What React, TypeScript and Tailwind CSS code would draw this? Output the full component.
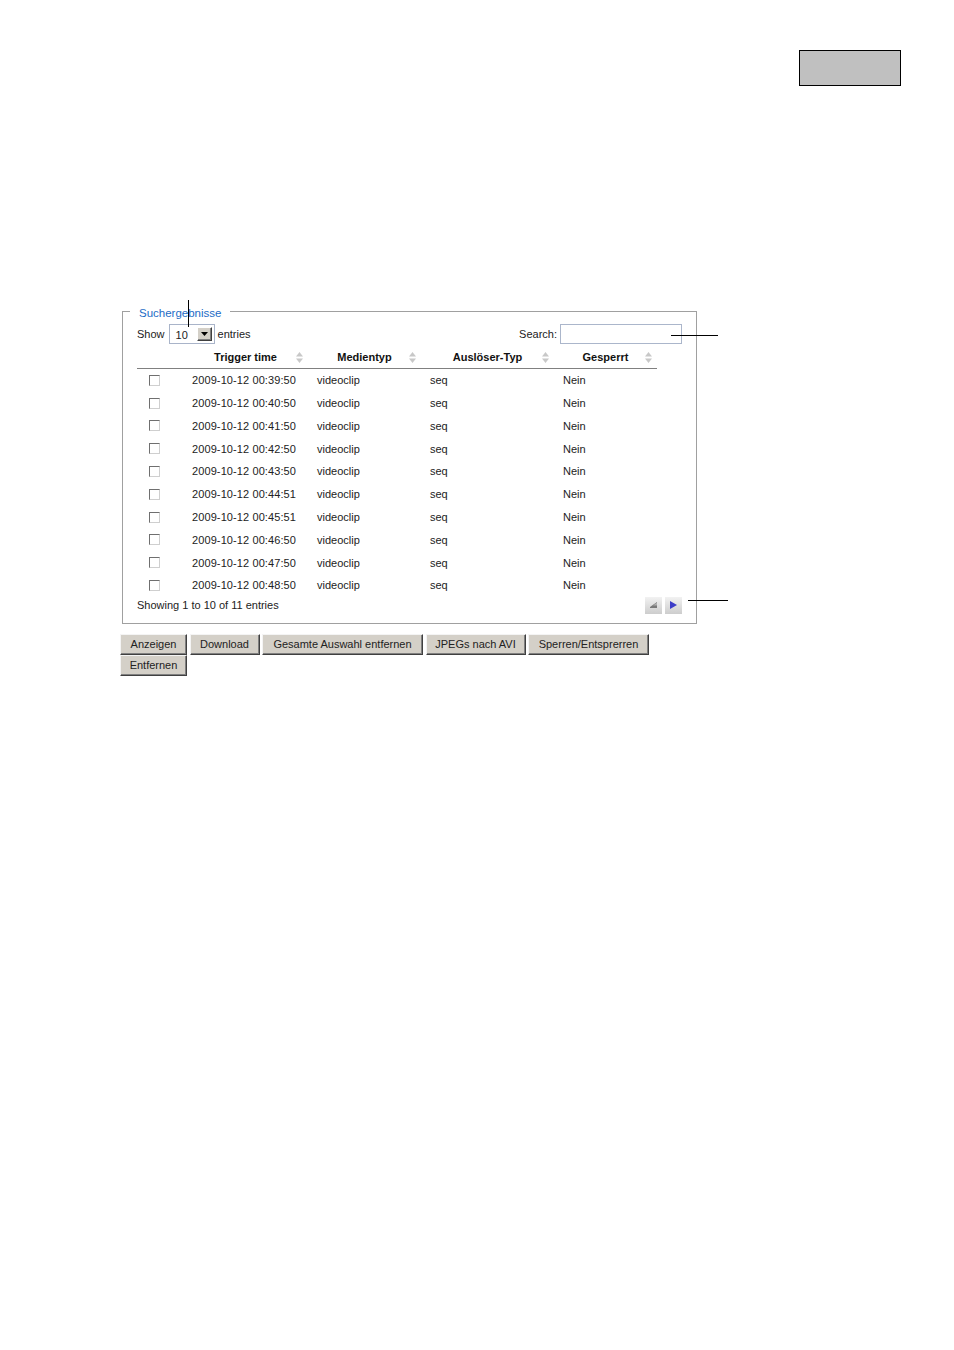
import React from "react";

const rows = [
  "2009-10-12 00:39:50",
  "2009-10-12 00:40:50",
  "2009-10-12 00:41:50",
  "2009-10-12 00:42:50",
  "2009-10-12 00:43:50",
  "2009-10-12 00:44:51",
  "2009-10-12 00:45:51",
  "2009-10-12 00:46:50",
  "2009-10-12 00:47:50",
  "2009-10-12 00:48:50",
];

function SortIcon() {
  return (
    <svg width="7" height="11" viewBox="0 0 7 11" className="shrink-0">
      <polygon points="3.5,0 7,4.5 0,4.5" fill="#c8c8c8" />
      <polygon points="0,6.5 7,6.5 3.5,11" fill="#c8c8c8" />
    </svg>
  );
}

function HeaderCell({ label }: { label: string }) {
  return (
    <div className="flex items-center pl-[12px] pr-[5px]">
      <span className="flex-1 text-center font-bold text-[#111]">{label}</span>
      <SortIcon />
    </div>
  );
}

function Checkbox() {
  return (
    <div className="w-[11px] h-[11px] ml-[12px] bg-white border border-t-[#6f6f6f] border-l-[#6f6f6f] border-r-[#cfcfcf] border-b-[#cfcfcf]" />
  );
}

function WinButton({ label, w }: { label: string; w: string }) {
  return (
    <button
      className={`${w} h-[21px] bg-[#d4d0c8] text-[#222] text-[11px] leading-none border-t border-l border-t-[#f4f4f4] border-l-[#f4f4f4] border-r border-b border-r-[#404040] border-b-[#404040] shadow-[inset_-1px_-1px_#808080] flex items-center justify-center`}
    >
      {label}
    </button>
  );
}

export default function App() {
  return (
    <div className="relative w-[954px] min-h-[1350px] bg-white text-[11px] text-[#222] font-['Liberation_Sans',Arial,sans-serif]">
      <div className="flex justify-end pt-[50px] pr-[53px]">
        <div className="w-[102px] h-[36px] bg-[#c0c0c0] border-[1.5px] border-black" />
      </div>

      <fieldset className="ml-[122px] mt-[216px] w-[575px] border border-[#a0a0a0] pl-[14px] pr-[14px] pt-[4px] pb-[9px]">
        <legend className="ml-[-7px] px-[9px] pt-[4px] leading-[14px] text-[11.5px] text-[#1d6bc6]">
          Suchergebnisse
        </legend>

        <div className="flex items-center justify-between h-[20px]">
          <div className="flex items-center">
            <span>Show</span>
            <div className="ml-[4px] w-[46px] h-[20px] border border-[#a9b4c9] bg-white flex items-center justify-between pl-[6px] pr-[2px]">
              <span className="pt-[3px]">10</span>
              <div className="w-[15px] h-[14px] bg-[#d4d0c8] border-t border-l border-t-white border-l-white border-r border-b border-r-[#404040] border-b-[#404040] shadow-[inset_-1px_-1px_#808080] flex items-center justify-center">
                <svg width="7" height="4" viewBox="0 0 7 4">
                  <polygon points="0,0 7,0 3.5,4" fill="#000" />
                </svg>
              </div>
            </div>
            <span className="ml-[3px]">entries</span>
          </div>
          <div className="flex items-center">
            <span>Search:</span>
            <div className="ml-[3px] w-[122px] h-[20px] border border-[#abb6cb] bg-white" />
          </div>
        </div>

        <div className="w-[520px] mt-[2px]">
          <div className="grid grid-cols-[46px_125px_113px_133px_103px] h-[23px] items-center border-b border-[#808080]">
            <div />
            <HeaderCell label="Trigger time" />
            <HeaderCell label="Medientyp" />
            <HeaderCell label="Auslöser-Typ" />
            <HeaderCell label="Gesperrt" />
          </div>
          {rows.map((d) => (
            <div
              key={d}
              className="grid grid-cols-[46px_125px_113px_133px_103px] h-[22.8px] items-center"
            >
              <Checkbox />
              <div className="pl-[9px] tracking-[0.1px]">{d}</div>
              <div className="pl-[9px]">videoclip</div>
              <div className="pl-[9px]">seq</div>
              <div className="pl-[9px]">Nein</div>
            </div>
          ))}
        </div>

        <div className="flex items-center justify-between h-[17px]">
          <span>Showing 1 to 10 of 11 entries</span>
          <div className="flex gap-[3px]">
            <div className="w-[17px] h-[17px] bg-gradient-to-b from-[#f2f2f2] to-[#cdcdcd] flex items-center justify-center">
              <svg width="7" height="6" viewBox="0 0 7 6">
                <polygon points="0,5 7,0 7,6 0,6" fill="#7a7a7a" />
                <polygon points="3,3.5 7,0.5 7,3.5" fill="#b0b0b0" />
              </svg>
            </div>
            <div className="w-[17px] h-[17px] bg-gradient-to-b from-[#f2f2f2] to-[#cdcdcd] flex items-center justify-center">
              <svg width="7" height="8" viewBox="0 0 7 8">
                <polygon points="0,0 7,4 0,8" fill="#3c3cc8" />
              </svg>
            </div>
          </div>
        </div>
      </fieldset>

      <div className="ml-[120px] mt-[10px] w-[578px] flex flex-wrap gap-x-[2.5px]">
        <WinButton label="Anzeigen" w="w-[67px]" />
        <WinButton label="Download" w="w-[70px]" />
        <WinButton label="Gesamte Auswahl entfernen" w="w-[161px]" />
        <WinButton label="JPEGs nach AVI" w="w-[100px]" />
        <WinButton label="Sperren/Entsprerren" w="w-[121px]" />
        <WinButton label="Entfernen" w="w-[67px]" />
      </div>

      <div className="absolute left-[188px] top-[300px] w-px h-[27px] bg-black" />
      <div className="absolute left-[671px] top-[335px] w-[47px] h-px bg-black" />
      <div className="absolute left-[688px] top-[600px] w-[40px] h-px bg-black" />
    </div>
  );
}
